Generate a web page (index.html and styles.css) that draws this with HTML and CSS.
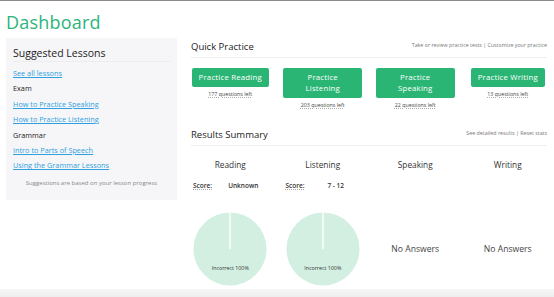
FILE: index.html
```html
<!DOCTYPE html>
<html lang="en">
<head>
  <meta charset="UTF-8">
  <meta name="viewport" content="width=device-width, initial-scale=1">
  <title>Dashboard</title>
  <link rel="stylesheet" href="styles.css">
</head>
<body>

  <div class="page">
    <h1 class="title">Dashboard</h1>

    <div class="layout">
      <aside class="sidebar">
        <h2 class="side-head">Suggested Lessons</h2>
        <ul class="lessons">
          <li><a href="#">See all lessons</a></li>
          <li>Exam</li>
          <li><a href="#">How to Practice Speaking</a></li>
          <li><a href="#">How to Practice Listening</a></li>
          <li>Grammar</li>
          <li><a href="#">Intro to Parts of Speech</a></li>
          <li><a href="#">Using the Grammar Lessons</a></li>
        </ul>
        <p class="note">Suggestions are based on your lesson progress</p>
      </aside>

      <main class="main">
        <div class="section-head">
          <h2>Quick Practice</h2>
          <span class="links">Take or review practice tests | Customize your practice</span>
        </div>
        <div class="cols practice">
          <div class="col">
            <button class="btn">Practice Reading</button>
            <span class="left">177 questions left</span>
          </div>
          <div class="col">
            <button class="btn">Practice Listening</button>
            <span class="left">203 questions left</span>
          </div>
          <div class="col">
            <button class="btn">Practice Speaking</button>
            <span class="left">22 questions left</span>
          </div>
          <div class="col">
            <button class="btn">Practice Writing</button>
            <span class="left">13 questions left</span>
          </div>
        </div>

        <div class="section-head results-head">
          <h2>Results Summary</h2>
          <span class="links">See detailed results | Reset stats</span>
        </div>
        <div class="cols results">
          <div class="col">
            <div class="skill">Reading</div>
            <div class="score"><span class="label">Score:</span><span class="value">Unknown</span></div>
            <div class="chart">
              <svg width="74" height="74" viewBox="0 0 74 74">
                <circle cx="37" cy="37" r="36.5" fill="#d2efe1"/>
                <line x1="37" y1="0" x2="37" y2="37" stroke="#fff" stroke-width="1.4"/>
              </svg>
              <span class="pie-label">Incorrect 100%</span>
            </div>
          </div>
          <div class="col">
            <div class="skill">Listening</div>
            <div class="score"><span class="label">Score:</span><span class="value">7 - 12</span></div>
            <div class="chart">
              <svg width="74" height="74" viewBox="0 0 74 74">
                <circle cx="37" cy="37" r="36.5" fill="#d2efe1"/>
                <line x1="37" y1="0" x2="37" y2="37" stroke="#fff" stroke-width="1.4"/>
              </svg>
              <span class="pie-label">Incorrect 100%</span>
            </div>
          </div>
          <div class="col">
            <div class="skill">Speaking</div>
            <div class="score"></div>
            <div class="chart empty">No Answers</div>
          </div>
          <div class="col">
            <div class="skill">Writing</div>
            <div class="score"></div>
            <div class="chart empty">No Answers</div>
          </div>
        </div>
      </main>
    </div>
  </div>

  <div class="footer"></div>

</body>
</html>
```

FILE: styles.css
```css
body {
  margin: 0;
  font-family: "Open Sans", "Noto Sans", sans-serif;
  color: #333;
  background-color: #fff;
  border-top: 1px solid #8a8a8a;
  height: 296px;
  overflow: hidden;
  position: relative;
}
.page {
  padding-left: 6px;
}
.title {
  margin: 0;
  height: 37px;
  line-height: 42px;
  font-size: 18px;
  font-weight: 400;
  color: #2cb57a;
  letter-spacing: 0.2px;
}
.layout {
  display: flex;
}
.sidebar {
  width: 157px;
  padding: 7px 7px 13px 7px;
  background-color: #f6f6f8;
  height: 142px;
}
.side-head {
  margin: 0 0 4px 0;
  font-size: 10.5px;
  line-height: 16px;
  font-weight: 400;
  color: #222;
  border-bottom: 1px solid #ececee;
  padding-bottom: 0;
}
.lessons {
  list-style: none;
  margin: 0;
  padding: 0;
}
.lessons li {
  font-size: 7.3px;
  line-height: 15.4px;
  color: #222;
}
.lessons a {
  color: #2f9fdf;
}
.note {
  margin: 4px 0 0 0;
  font-size: 6px;
  line-height: 10px;
  color: #888;
  text-align: center;
}
.main {
  width: 370px;
  margin-left: 7px;
}
.section-head {
  display: flex;
  justify-content: space-between;
  align-items: center;
  margin: 0 7px 0 7px;
  height: 19px;
  border-bottom: 1px solid #eee;
  padding-top: 0;
}
.section-head h2 {
  margin: 0;
  font-size: 9.5px;
  font-weight: 400;
  color: #222;
  position: relative;
  top: -1px;
}
.section-head .links {
  font-size: 5.3px;
  color: #777;
  position: relative;
  top: -3px;
}
.cols {
  display: grid;
  grid-template-columns: repeat(4, 1fr);
}
.col {
  display: flex;
  flex-direction: column;
  align-items: center;
}
.practice {
  margin-top: 10px;
}
.btn {
  box-sizing: border-box;
  max-width: 79px;
  font-family: "Open Sans", "Noto Sans", sans-serif;
  font-size: 7.8px;
  line-height: 11.5px;
  padding: 3.5px 7px;
  background-color: #2bb575;
  color: #fff;
  border: none;
  border-radius: 2px;
  letter-spacing: 0.2px;
}
.left {
  margin-top: 3px;
  font-size: 5.3px;
  line-height: 8px;
  color: #444;
  text-decoration: underline dotted #aaa;
}
.results-head {
  margin-top: 17px;
}
.results .col {
  align-items: stretch;
}
.skill {
  text-align: center;
  font-size: 8.3px;
  line-height: 12px;
  margin-top: 13px;
  color: #333;
}
.score {
  display: flex;
  height: 12px;
  margin-top: 9px;
  font-size: 6.5px;
  line-height: 12px;
  font-weight: 600;
  color: #333;
}
.score .label {
  width: 24px;
  margin-left: 9px;
  text-decoration: underline dotted #aaa;
}
.score .value {
  flex: 1;
  text-align: center;
  padding-right: 7px;
}
.chart {
  position: relative;
  margin-top: 20px;
  height: 74px;
  display: flex;
  justify-content: center;
}
.pie-label {
  position: absolute;
  top: 52px;
  left: 0;
  right: 0;
  text-align: center;
  font-size: 5.3px;
  color: #333;
}
.chart.empty {
  align-items: center;
  font-size: 8.6px;
  color: #444;
}
.footer {
  position: absolute;
  left: 0;
  right: 0;
  bottom: 0;
  height: 8px;
  background: linear-gradient(#f7f7f7, #eeeeee);
}
```
